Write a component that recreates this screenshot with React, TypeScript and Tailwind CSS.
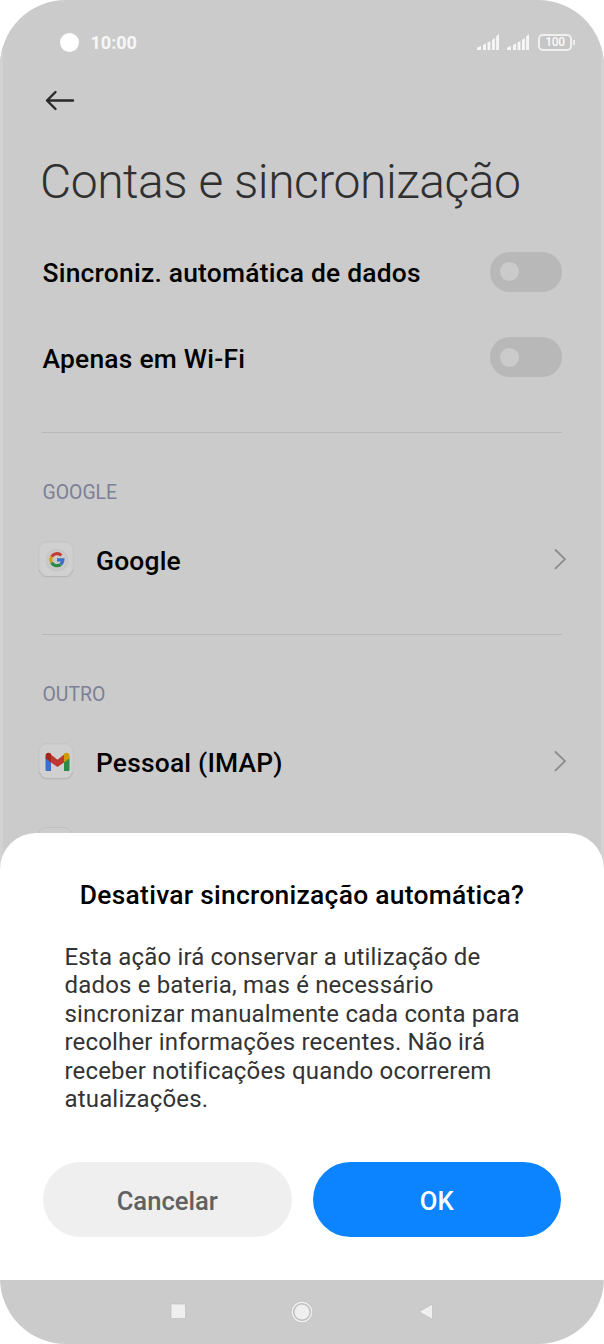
import { useState } from "react";
import type { ReactNode } from "react";

function SignalIcon() {
  return (
    <svg width="24" height="18" viewBox="0 0 24 18" fill="#f6f6f6">
      <path d="M1 17v-2.2L5 13v4zM7 12l3-1.5V17H7zM11.5 9.6l2.9-1.4V17h-2.9zM16 7l2.9-2v12H16zM20.1 3.6 23 1v16h-2.9z" />
    </svg>
  );
}

function BatteryIcon() {
  return (
    <div className="flex items-center">
      <div className="flex h-[17px] w-[34px] items-center justify-center rounded-[5px] border-2 border-[#f0f0f0] bg-[#c5c5c5] text-[12px] leading-none font-medium tracking-[-0.3px] text-[#fafafa]">
        100
      </div>
      <div className="ml-px h-[5px] w-[2px] bg-[#ededed]" />
    </div>
  );
}

function IconTile() {
  return (
    <>
      <rect x="0.7" y="0.7" width="34.6" height="35" rx="8" fill="#cecece" stroke="#bfbfbf" strokeWidth="0.6" />
      <path d="M1.500 29q1.500 6.700 8 6.700h17q6.500 0 8-6.700" fill="none" stroke="#acacac" strokeWidth="0.7" />
      <rect x="2.3" y="2" width="31.5" height="32" rx="7" fill="#d0d0d0" />
    </>
  );
}

function GoogleIcon() {
  return (
    <svg width="36" height="37" viewBox="0 0 36 37">
      <IconTile />
      <circle cx="19" cy="19.2" r="11.2" fill="#c2c2c2" />
      <circle cx="19" cy="18.9" r="10.5" fill="#cacaca" />
      <g fill="none" strokeWidth="3.2">
        <path d="M13.600 15.800a6.100 6.100 0 0 1 9.700-1.300" stroke="#c43c31" />
        <path d="M13.600 21.600a6.100 6.100 0 0 1 0-5.800" stroke="#d0a010" />
        <path d="M22.700 23.400a6.100 6.100 0 0 1-9.100-1.800" stroke="#2d8a49" />
        <path d="M19 18.900h5.900a6.100 6.100 0 0 1-2.200 4.500" stroke="#3b71c8" />
      </g>
    </svg>
  );
}

function GmailIcon() {
  return (
    <svg width="36" height="37" viewBox="0 0 36 37">
      <IconTile />
      <path d="M7.500 14.500 13 18.500V28H8.700q-1.200 0-1.200-1.200z" fill="#3a6fcb" />
      <path d="M31.500 14.500 26 18.500V28h4.300q1.200 0 1.200-1.200z" fill="#2b8a47" />
      <path d="m12 10.800 7.500 5.900 7.500-5.900v8l-7.500 5.200-7.500-5.200z" fill="#bf382e" />
      <path d="M7.500 12.800c0-3 3-4 5.500-2v8.700l-5.500-4.200z" fill="#a5251e" />
      <path d="M31.500 12.800c0-3-3-4-5.500-2v8.700l5.500-4.200z" fill="#cf9c09" />
    </svg>
  );
}

function Toggle({ label }: { label: string }) {
  const [on, setOn] = useState(false);

  return (
    <div className="flex h-[85.5px] items-center justify-between pr-[42px] pl-[42.5px]">
      <span className="pt-[3px] text-[26.4px] leading-[30px] font-medium tracking-[0.23px] text-black">{label}</span>
      <button
        type="button"
        role="switch"
        aria-label={label}
        aria-checked={on}
        onClick={() => setOn(!on)}
        className={`flex h-[40px] w-[72px] items-center rounded-full bg-[#b8b8b8] px-[10px] ${on ? "justify-end" : ""}`}
      >
        <span className="size-[19px] rounded-full bg-[#cbcbcb]" />
      </button>
    </div>
  );
}

function Account({ icon, name }: { icon: ReactNode; name: string }) {
  return (
    <div className="flex h-[84px] items-center pr-[37px] pl-[38px]">
      {icon}
      <span className="mt-[3px] ml-[22px] grow text-[26.4px] leading-[30px] font-medium tracking-[0.2px] text-black">{name}</span>
      <svg width="13" height="22" viewBox="0 0 13 22" fill="none" stroke="#8c8c8c" strokeWidth="1.8" strokeLinecap="round" strokeLinejoin="round">
        <path d="m1.500 2 9.500 9.200-9.500 9.200" />
      </svg>
    </div>
  );
}

export default function App() {
  return (
    <div className="h-[1344px] w-[604px] bg-white font-['Roboto',sans-serif]">
      <div className="relative flex h-full flex-col overflow-hidden rounded-[66px] bg-[#cbcbcb]">
        <div className="grow border-x-[3px] border-[#d2d2d2]">
          <div className="-mx-[3px]">
            <header className="flex h-[84px] items-center pl-[60px] pr-[29px]">
              <span className="size-[19px] rounded-full bg-white" />
              <span className="ml-[11.5px] grow pt-[2px] text-[18px] leading-none font-bold text-[#f7f7f7]">10:00</span>
              <div className="flex items-center gap-[6px]">
                <SignalIcon />
                <SignalIcon />
                <div className="ml-[2px]">
                  <BatteryIcon />
                </div>
              </div>
            </header>
            <svg className="mt-[5px] ml-[44px]" width="32" height="23" viewBox="0 0 32 23" fill="none" stroke="#292929" strokeWidth="2.4" strokeLinecap="round" strokeLinejoin="round">
              <path d="M29 11.500H3M11.500 3 3 11.500l8.500 8.500" />
            </svg>
            <h1 className="mt-[42px] ml-[40px] text-[48px] leading-[56px] font-light tracking-[-0.47px] whitespace-nowrap text-[#303030]">
              Contas e sincronização
            </h1>
            <div className="mt-[19px]">
              <Toggle label="Sincroniz. automática de dados" />
              <Toggle label="Apenas em Wi-Fi" />
            </div>
            <div className="mx-[42px] mt-[32px] h-px bg-[#b8b8b8]" />
            <h2 className="mt-[48px] ml-[42.5px] text-[19.4px] leading-[24px] text-[#7c7f96]">GOOGLE</h2>
            <div className="mt-[12px]">
              <Account icon={<GoogleIcon />} name="Google" />
            </div>
            <div className="mx-[42px] mt-[33px] h-px bg-[#b8b8b8]" />
            <h2 className="mt-[48px] ml-[42.5px] text-[19.4px] leading-[24px] text-[#7c7f96]">OUTRO</h2>
            <div className="mt-[12px]">
              <Account icon={<GmailIcon />} name="Pessoal (IMAP)" />
            </div>
            <div className="mt-[24px] ml-[38px] h-[34px] w-[34px] rounded-[8px] border border-[#c0c0c0] bg-[#cdcdcd]" />
          </div>
        </div>

        <section role="dialog" className="absolute inset-x-0 top-[833px] h-[447px] rounded-t-[36px] bg-white pt-[47px]">
          <h3 className="text-center text-[26.4px] leading-[30px] font-medium tracking-[0.27px] text-black">
            Desativar sincronização automática?
          </h3>
          <p className="mt-[32.5px] ml-[64.5px] text-[24px] leading-[28.6px] tracking-[0.17px] whitespace-nowrap text-[#333]">
            Esta ação irá conservar a utilização de
            <br />
            dados e bateria, mas é necessário
            <br />
            sincronizar manualmente cada conta para
            <br />
            recolher informações recentes. Não irá
            <br />
            receber notificações quando ocorrerem
            <br />
            atualizações.
          </p>
          <div className="mt-[48.4px] flex gap-[21px] px-[43px]">
            <button type="button" className="h-[75px] flex-1 rounded-full bg-[#efefef] pt-[3px] text-[25.6px] font-medium text-[#616161]">
              Cancelar
            </button>
            <button type="button" className="h-[75px] flex-1 rounded-full bg-[#0d84ff] pt-[3px] text-[25.6px] font-medium text-white">
              OK
            </button>
          </div>
        </section>

        <nav className="flex h-[64px] shrink-0 items-center justify-between pr-[169px] pl-[168.5px]">
          <svg width="18" height="18" viewBox="0 0 18 18">
            <rect x="2" y="1" width="14.5" height="14.5" rx="0.8" fill="#efefef" stroke="#bdbdbd" strokeWidth="0.7" />
          </svg>
          <svg width="24" height="24" viewBox="0 0 24 24">
            <circle cx="12" cy="12" r="10.9" fill="#bdbdbd" />
            <circle cx="12" cy="12" r="9.7" fill="#bdbdbd" stroke="#efefef" strokeWidth="1.5" />
            <circle cx="12" cy="12" r="7.5" fill="#efefef" />
          </svg>
          <svg width="18" height="18" viewBox="0 0 18 18">
            <path d="M15.500 1v15.500L2 8.700z" fill="#efefef" stroke="#bdbdbd" strokeWidth="0.7" strokeLinejoin="round" />
          </svg>
        </nav>
      </div>
    </div>
  );
}
